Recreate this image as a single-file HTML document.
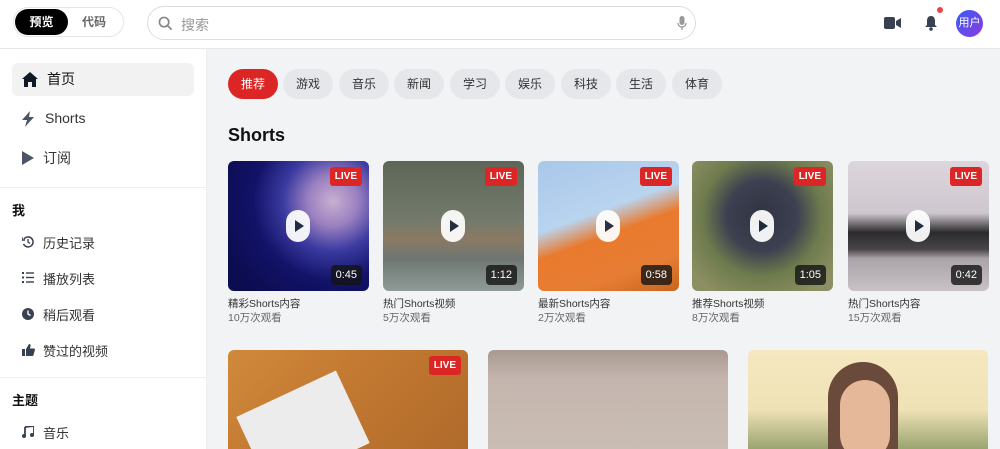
<!DOCTYPE html>
<html><head><meta charset="utf-8"><style>
*{box-sizing:border-box;margin:0;padding:0}
html{width:1000px;height:449px;overflow:hidden}
body{width:1000px;height:449px;overflow:hidden;background:#f2f3f5;font-family:"Liberation Sans","Noto Sans CJK SC",sans-serif;position:relative;color:#111}
.hdr{position:absolute;left:0;top:0;width:1000px;height:49px;background:#fff;border-bottom:1px solid #e8e8ea}
.tog{position:absolute;left:13px;top:7px;width:111px;height:30px;border:1px solid #e5e5e5;border-radius:15px}
.tog .a{position:absolute;left:1px;top:1px;width:53px;height:26px;background:#000;color:#fff;border-radius:13px;font-size:12px;font-weight:bold;text-align:center;line-height:26px}
.tog .b{position:absolute;left:68px;top:0;font-size:12px;color:#666;line-height:28px;font-weight:bold}
.srch{position:absolute;left:147px;top:6px;width:549px;height:34px;border:1px solid #ddd;border-radius:17px;background:#fff}
.srch span{position:absolute;left:33px;top:8px;font-size:14px;color:#999}
.side{position:absolute;left:0;top:49px;width:207px;height:400px;background:#fff;border-right:1px solid #eee}
.it{position:absolute;left:12px;width:182px;height:33px;font-size:14px;color:#333;line-height:33px}
.it svg{position:absolute;left:10px;top:9px}
.it span{position:absolute;left:35px}
.sm{font-size:13px}
.sm span{left:31px}
.hd{position:absolute;left:12px;font-size:13px;font-weight:bold}
.dv{position:absolute;left:0;width:207px;height:1px;background:#eee}
.chip{position:absolute;top:69px;height:30px;width:50px;border-radius:15px;background:#e5e7eb;font-size:12px;color:#333;text-align:center;line-height:30px}
.card{position:absolute;top:161px;width:141px;height:130px;border-radius:6px;overflow:hidden}
.live{position:absolute;right:7px;top:6px;background:#dc2626;color:#fff;font-size:10px;font-weight:bold;padding:0 5px;height:19px;line-height:19px;border-radius:3px}
.dur{position:absolute;right:7px;bottom:6px;background:rgba(20,20,20,.8);color:#fff;font-size:11px;padding:0 5px;height:20px;line-height:20px;border-radius:4px}
.play{position:absolute;left:58px;top:49px;width:24px;height:32px;background:#fff;border-radius:12px;opacity:.93}
.play:after{content:"";position:absolute;left:9px;top:10px;border-left:9px solid #1e293b;border-top:6px solid transparent;border-bottom:6px solid transparent}
.t{position:absolute;top:297px;font-size:10.5px;color:#333;line-height:14px}
.t div+div{color:#666}
.big{position:absolute;top:350px;width:240px;height:99px;border-radius:6px 6px 0 0;overflow:hidden}
</style></head><body>
<div class="hdr">
<div class="tog"><div class="a">预览</div><div class="b">代码</div></div>
<div class="srch"><svg style="position:absolute;left:10px;top:9px" width="15" height="15" viewBox="0 0 16 16"><circle cx="6.5" cy="6.5" r="5" fill="none" stroke="#888" stroke-width="1.8"/><path d="M10.5 10.5L14.5 14.5" stroke="#888" stroke-width="1.8"/></svg><span>搜索</span>
<svg style="position:absolute;left:529px;top:9px" width="10" height="15" viewBox="0 0 10 15"><rect x="2.5" y="0" width="5" height="9" rx="2.5" fill="#999"/><path d="M1 7a4 4 0 0 0 8 0M5 11v3" stroke="#999" fill="none" stroke-width="1.3"/></svg></div>
<svg style="position:absolute;left:884px;top:17px" width="17" height="12" viewBox="0 0 17 12"><rect x="0" y="0" width="11" height="12" rx="2" fill="#374151"/><path d="M12 4L17 1V11L12 8Z" fill="#374151"/></svg>
<svg style="position:absolute;left:924px;top:15px" width="14" height="16" viewBox="0 0 14 16"><path d="M7 1C4 1 3 3.5 3 6V10L1 12H13L11 10V6C11 3.5 10 1 7 1Z" fill="#374151"/><circle cx="7" cy="14" r="1.8" fill="#374151"/></svg>
<div style="position:absolute;left:937px;top:7px;width:6px;height:6px;border-radius:50%;background:#ef4444"></div>
<div style="position:absolute;left:956px;top:10px;width:27px;height:27px;border-radius:50%;background:linear-gradient(135deg,#3b5bf5,#8b3be0);color:#fff;font-size:11px;line-height:27px;text-align:center">用户</div>
</div>
<div class="side">
<div class="it" style="top:14px;background:#f2f2f3;border-radius:6px;color:#111"><svg width="16" height="15" viewBox="0 0 16 15"><path d="M8 0L0 7H2V15H6V10H10V15H14V7H16Z" fill="#111827"/></svg><span>首页</span></div>
<div class="it" style="top:53px"><svg width="12" height="16" viewBox="0 0 12 16"><path d="M8 0L0 9H5L3 16L12 6H7Z" fill="#4b5563"/></svg><span style="left:33px">Shorts</span></div>
<div class="it" style="top:93px"><svg width="12" height="14" viewBox="0 0 12 14"><path d="M0 0L12 7L0 14Z" fill="#4b5563"/></svg><span style="left:31px">订阅</span></div>
<div class="dv" style="top:138px"></div>
<div class="hd" style="top:151px">我</div>
<div class="it sm" style="top:178px"><svg width="12" height="12" viewBox="0 0 12 12"><path d="M2 3A5 5 0 1 1 1.5 8" fill="none" stroke="#374151" stroke-width="1.5"/><path d="M0 1V4H3" fill="none" stroke="#374151" stroke-width="1.4"/><path d="M6 3V6L8 7.5" stroke="#374151" stroke-width="1.3" fill="none"/></svg><span>历史记录</span></div>
<div class="it sm" style="top:214px"><svg width="12" height="11" viewBox="0 0 12 11"><g fill="#374151"><rect x="0" y="0" width="2" height="2"/><rect x="0" y="4.5" width="2" height="2"/><rect x="0" y="9" width="2" height="2"/><rect x="4" y="0.3" width="8" height="1.4"/><rect x="4" y="4.8" width="8" height="1.4"/><rect x="4" y="9.3" width="8" height="1.4"/></g></svg><span>播放列表</span></div>
<div class="it sm" style="top:250px"><svg width="12" height="12" viewBox="0 0 12 12"><circle cx="6" cy="6" r="6" fill="#374151"/><path d="M6 2.5V6L8.5 7.5" stroke="#fff" stroke-width="1.4" fill="none"/></svg><span>稍后观看</span></div>
<div class="it sm" style="top:286px"><svg width="13" height="12" viewBox="0 0 13 12"><path d="M0 5H3V12H0ZM4 5L7 0C8.5 0 8.8 1 8.5 2.5L8 4.5H12C13 4.5 13 5.5 12.8 6.5L11.5 11C11.3 11.7 10.8 12 10 12H4Z" fill="#374151"/></svg><span>赞过的视频</span></div>
<div class="dv" style="top:328px"></div>
<div class="hd" style="top:341px">主题</div>
<div class="it sm" style="top:368px"><svg width="12" height="12" viewBox="0 0 12 12"><path d="M3 1L12 0V9" stroke="#374151" stroke-width="1.8" fill="none"/><path d="M3 1V10" stroke="#374151" stroke-width="1.8"/><circle cx="2" cy="10" r="2" fill="#374151"/><circle cx="10" cy="9" r="2" fill="#374151"/></svg><span>音乐</span></div>
</div>

<div class="chip" style="left:228px;background:#dc2626;color:#fff">推荐</div>
<div class="chip" style="left:283px">游戏</div>
<div class="chip" style="left:339px">音乐</div>
<div class="chip" style="left:394px">新闻</div>
<div class="chip" style="left:450px">学习</div>
<div class="chip" style="left:505px">娱乐</div>
<div class="chip" style="left:561px">科技</div>
<div class="chip" style="left:616px">生活</div>
<div class="chip" style="left:672px">体育</div>
<div style="position:absolute;left:228px;top:125px;font-size:18px;font-weight:bold">Shorts</div>

<div class="card" style="left:228px;background:radial-gradient(circle at 105px 40px,#c9b0d0 0,#9a80c0 25px,#3a3aa0 50px,#121268 80px,#0c0c50 120px)"><div class="live">LIVE</div><div class="play"></div><div class="dur">0:45</div></div>
<div class="card" style="left:383px;background:linear-gradient(180deg,#5d6658 0,#737a6c 45%,#8a7a64 60%,#6f7672 75%,#8f9a98 100%)"><div class="live">LIVE</div><div class="play"></div><div class="dur">1:12</div></div>
<div class="card" style="left:538px;background:linear-gradient(160deg,#a9c7ea 0,#b9d4ee 40%,#e97a2d 55%,#e67d34 80%,#c7651f 100%)"><div class="live">LIVE</div><div class="play"></div><div class="dur">0:58</div></div>
<div class="card" style="left:692px;background:radial-gradient(circle at 70px 55px,#2f3342 0,#3d4050 35px,#6e7b4d 60px,#8c8f62 90px)"><div class="live">LIVE</div><div class="play"></div><div class="dur">1:05</div></div>
<div class="card" style="left:848px;background:linear-gradient(180deg,#dcd6dc 0,#cfc7cf 40%,#2a2a2c 55%,#4a4649 68%,#aaa3a8 75%,#c8c1c6 100%)"><div class="live">LIVE</div><div class="play"></div><div class="dur">0:42</div></div>

<div class="t" style="left:228px"><div>精彩Shorts内容</div><div>10万次观看</div></div>
<div class="t" style="left:383px"><div>热门Shorts视频</div><div>5万次观看</div></div>
<div class="t" style="left:538px"><div>最新Shorts内容</div><div>2万次观看</div></div>
<div class="t" style="left:692px"><div>推荐Shorts视频</div><div>8万次观看</div></div>
<div class="t" style="left:848px"><div>热门Shorts内容</div><div>15万次观看</div></div>

<div class="big" style="left:228px;background:linear-gradient(135deg,#d08a3c 0,#c47a32 40%,#b06a2a 100%)"><div style="position:absolute;left:20px;top:40px;width:110px;height:80px;background:#ececec;transform:rotate(-25deg)"></div><div class="live">LIVE</div></div>
<div class="big" style="left:488px;background:linear-gradient(180deg,#a89890 0,#c4b6ae 30%,#cabdb3 100%)"></div>
<div class="big" style="left:748px;background:linear-gradient(180deg,#f5e8c0 0,#efe2b6 60%,#9aa470 100%)"><div style="position:absolute;left:80px;top:12px;width:70px;height:100px;border-radius:35px 35px 0 0;background:#6a4a3a"></div><div style="position:absolute;left:92px;top:30px;width:50px;height:80px;border-radius:25px;background:#e6b89a"></div></div>
</body></html>
